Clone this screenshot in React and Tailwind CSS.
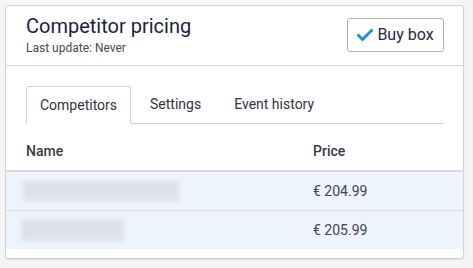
import React from 'react';

const rows = [
  { price: '€ 204.99', bar: 'w-[156px] h-[20px] ml-[-3px]' },
  { price: '€ 205.99', bar: 'w-[102px] h-[22px] ml-[-4px]' },
];

const tabs = ['Competitors', 'Settings', 'Event history'];

export default function App() {
  return (
    <div className="w-[473px] h-[268px] bg-[#f5f5f5] p-[5px] font-['Roboto',sans-serif]">
      <div className="w-[459px] h-[254px] bg-white border border-[#d2d2d2] rounded-[3px] shadow-[0_1px_1px_rgba(0,0,0,0.08)] flex flex-col">
        {/* header */}
        <div className="h-[60px] border-b border-[#d4d4d4] flex items-start justify-between pl-[20px] pr-[19px]">
          <div className="pt-[8px]">
            <div className="text-[20px] leading-[24px] text-[#22223a]">Competitor pricing</div>
            <div className="text-[12px] leading-[14px] text-[#4a4a55] mt-[3px]">Last update: Never</div>
          </div>
          <button className="mt-[12px] h-[34px] w-[97px] border border-[#b3b3b8] rounded-[3px] bg-white flex items-center justify-center gap-[4px] text-[16px] text-[#2a2a3a]">
            <svg width="16" height="14" viewBox="0 0 16 14">
              <path d="M1.5 7.5 L5.5 11.5 L14.5 2.5" fill="none" stroke="#1e93d4" strokeWidth="3" strokeLinecap="square" />
            </svg>
            Buy box
          </button>
        </div>

        {/* tabs */}
        <div className="px-[20px] pt-[20px]">
          <div className="flex gap-[5px] border-b border-[#d0d0d0] h-[38px]">
            {tabs.map((t, i) => (
              <div
                key={t}
                className={
                  i === 0
                    ? 'h-[38px] px-[13px] flex items-center text-[14px] text-[#333344] border border-[#d0d0d0] border-b-white bg-white rounded-t-[2px] mb-[-1px]'
                    : 'h-[37px] px-[14px] flex items-center text-[14px] text-[#333344]'
                }
              >
                {t}
              </div>
            ))}
          </div>
        </div>

        {/* table */}
        <div className="mt-[8px]">
          <div className="flex h-[40px] items-center border-b-2 border-[#dcdcdc] text-[14px] font-medium text-[#3a3a46]">
            <div className="flex-1 pl-[20px]">Name</div>
            <div className="w-[150px]">Price</div>
          </div>
          {rows.map((r, i) => (
            <div
              key={i}
              className={
                'flex h-[38px] items-center bg-[#edf4fb] text-[14px] text-[#444450] ' +
                (i === 0 ? 'border-b border-[#d8dbe0] h-[39px]' : '')
              }
            >
              <div className="flex-1 pl-[20px]">
                <div className={'bg-[#dde1e9] blur-[2px] ' + r.bar}></div>
              </div>
              <div className="w-[150px]">{r.price}</div>
            </div>
          ))}
        </div>
      </div>
    </div>
  );
}
